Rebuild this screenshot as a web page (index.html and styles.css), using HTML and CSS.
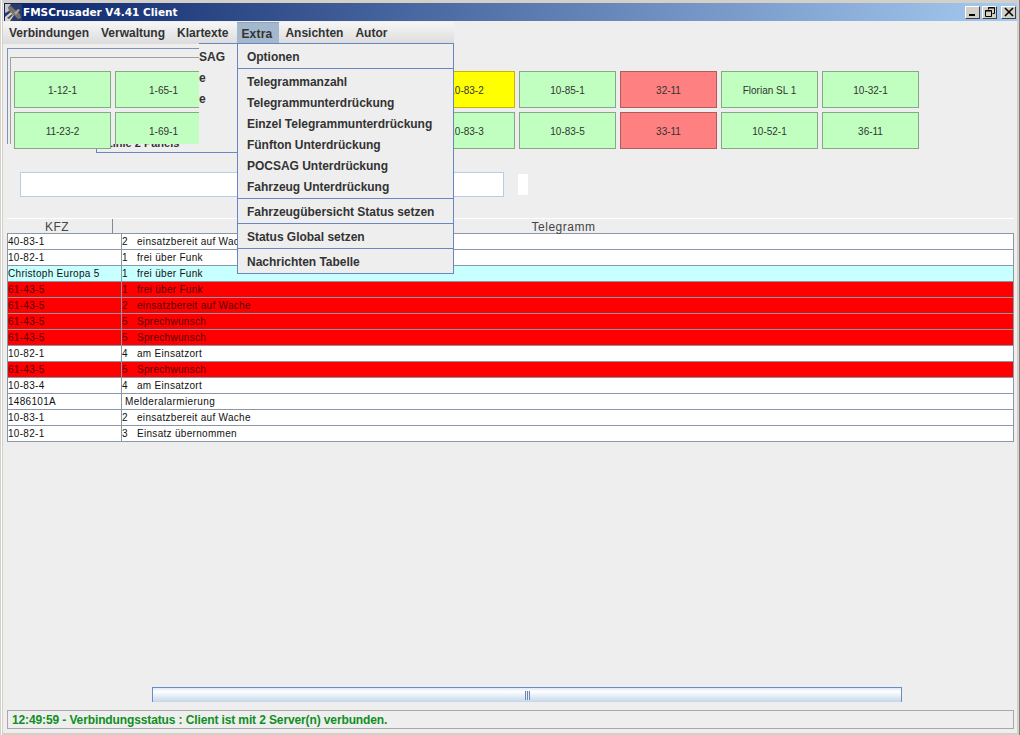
FILE: index.html
```html
<!DOCTYPE html>
<html lang="en">

<head>
    <meta charset="UTF-8">
    <title>FMSCrusader V4.41 Client</title>
    <link rel="stylesheet" href="styles.css">
</head>

<body>
    <div class="window">

        <!-- Title Bar -->
        <div class="titlebar">
            <svg class="app-icon" width="17" height="17" viewBox="0 0 17 17">
                <rect width="17" height="17" fill="#2a3a6e" />
                <path d="M0 0H6L3 4L6 6L0 9Z" fill="#c9c6bc" />
                <path d="M0 17V13L6 8L9 11L5 17Z" fill="#d8d5cc" />
                <path d="M3 3L6 2L9 5L15 10L16 14L13 15L8 10L4 7Z" fill="#77736a" />
                <path d="M9 9L13 5L15 6L11 11Z" fill="#a8a498" />
                <path d="M2 14L7 10L8 11L4 15Z" fill="#4c4a44" />
            </svg>
            <span class="title-text">FMSCrusader V4.41 Client</span>
            <div class="win-buttons">
                <div class="win-btn">
                    <svg width="10" height="10" viewBox="0 0 10 10"><rect x="1" y="7" width="6" height="2" fill="#000" /></svg>
                </div>
                <div class="win-btn">
                    <svg width="10" height="10" viewBox="0 0 10 10"><path d="M3.5 2.5V0.5H9.5V6.5H7.5M0.5 3.5H6.5V9.5H0.5Z M0.5 4H6.5 M3.5 1H9.5" fill="none" stroke="#000" /></svg>
                </div>
                <div class="win-btn">
                    <svg width="10" height="10" viewBox="0 0 10 10"><path d="M1 1L9 9M9 1L1 9" fill="none" stroke="#000" stroke-width="1.6" /></svg>
                </div>
            </div>
        </div>

        <!-- Menu Bar -->
        <nav class="menubar">
            <a>Verbindungen</a>
            <a>Verwaltung</a>
            <a>Klartexte</a>
            <a class="active">Extra</a>
            <a>Ansichten</a>
            <a>Autor</a>
        </nav>

        <!-- Vehicle Buttons -->
        <div class="panel">
            <div class="group-outer"></div>
            <div class="group-inner"></div>

            <div class="btn-grid">
                <div class="veh-btn">1-12-1</div>
                <div class="veh-btn">1-65-1</div>
                <div class="veh-btn"></div>
                <div class="veh-btn"></div>
                <div class="veh-btn yellow">10-83-2</div>
                <div class="veh-btn">10-85-1</div>
                <div class="veh-btn red">32-11</div>
                <div class="veh-btn">Florian SL 1</div>
                <div class="veh-btn">10-32-1</div>
                <div class="veh-btn front">11-23-2</div>
                <div class="veh-btn">1-69-1</div>
                <div class="veh-btn"></div>
                <div class="veh-btn"></div>
                <div class="veh-btn">10-83-3</div>
                <div class="veh-btn">10-83-5</div>
                <div class="veh-btn red">33-11</div>
                <div class="veh-btn">10-52-1</div>
                <div class="veh-btn">36-11</div>
            </div>

            <!-- Leftovers of the panel behind the menu -->
            <div class="ghost">
                <span class="ghost-title">SAG</span>
                <span class="ghost-e">e</span>
                <span class="ghost-e">e</span>
            </div>
            <div class="ghost-strip"><span>Linie 2 Panels</span></div>

            <div class="inputs">
                <div class="text-field"></div>
                <div class="small-field"></div>
            </div>
        </div>

        <!-- Telegram Table -->
        <div class="table-wrap">
            <div class="table-head">
                <div class="head-kfz">KFZ</div>
                <div class="head-tele">Telegramm</div>
            </div>
            <div class="table-body">
                <div class="row"><div class="kfz">40-83-1</div><div class="code">2</div><div class="msg">einsatzbereit auf Wache</div></div>
                <div class="row"><div class="kfz">10-82-1</div><div class="code">1</div><div class="msg">frei über Funk</div></div>
                <div class="row cyan"><div class="kfz">Christoph Europa 5</div><div class="code">1</div><div class="msg">frei über Funk</div></div>
                <div class="row alarm"><div class="kfz">61-43-5</div><div class="code">1</div><div class="msg">frei über Funk</div></div>
                <div class="row alarm"><div class="kfz">61-43-5</div><div class="code">2</div><div class="msg">einsatzbereit auf Wache</div></div>
                <div class="row alarm"><div class="kfz">61-43-5</div><div class="code">5</div><div class="msg">Sprechwunsch</div></div>
                <div class="row alarm"><div class="kfz">61-43-5</div><div class="code">5</div><div class="msg">Sprechwunsch</div></div>
                <div class="row"><div class="kfz">10-82-1</div><div class="code">4</div><div class="msg">am Einsatzort</div></div>
                <div class="row alarm"><div class="kfz">61-43-5</div><div class="code">5</div><div class="msg">Sprechwunsch</div></div>
                <div class="row"><div class="kfz">10-83-4</div><div class="code">4</div><div class="msg">am Einsatzort</div></div>
                <div class="row"><div class="kfz">1486101A</div><div class="melder">Melderalarmierung</div></div>
                <div class="row"><div class="kfz">10-83-1</div><div class="code">2</div><div class="msg">einsatzbereit auf Wache</div></div>
                <div class="row"><div class="kfz">10-82-1</div><div class="code">3</div><div class="msg">Einsatz übernommen</div></div>
            </div>
        </div>

        <div class="spacer"></div>

        <!-- Scrollbar and Status -->
        <div class="scrollbar"><div class="grip"></div></div>
        <div class="statusbar">12:49:59 - Verbindungsstatus : Client ist mit 2 Server(n) verbunden.</div>

        <!-- Open Extra Menu -->
        <div class="menu">
            <div class="menu-section">
                <div class="menu-item">Optionen</div>
            </div>
            <div class="menu-section">
                <div class="menu-item">Telegrammanzahl</div>
                <div class="menu-item">Telegrammunterdrückung</div>
                <div class="menu-item">Einzel Telegrammunterdrückung</div>
                <div class="menu-item">Fünfton Unterdrückung</div>
                <div class="menu-item">POCSAG Unterdrückung</div>
                <div class="menu-item">Fahrzeug Unterdrückung</div>
            </div>
            <div class="menu-section">
                <div class="menu-item">Fahrzeugübersicht Status setzen</div>
            </div>
            <div class="menu-section">
                <div class="menu-item">Status Global setzen</div>
            </div>
            <div class="menu-section">
                <div class="menu-item">Nachrichten Tabelle</div>
            </div>
        </div>

    </div>
</body>

</html>
```

FILE: styles.css
```css
/* Basic CSS for layout */
body {
    margin: 0;
    font-family: "Liberation Sans", Arial, sans-serif;
    background-color: #eeeeee;
    color: #333;
}

.window {
    position: relative;
    box-sizing: border-box;
    width: 1020px;
    height: 735px;
    padding: 3px 3px 2px 3px;
    display: flex;
    flex-direction: column;
    overflow: hidden;
    background-color: #eeeeee;
    box-shadow: inset 1px 0 0 #d4d0c8, inset 2px 0 0 #fff, inset 3px 0 0 #d4d0c8,
        inset -1px 0 0 #808080, inset -3px 0 0 #d4d0c8, inset 0 3px 0 #d4d0c8, inset 0 -2px 0 #d4d0c8;
}

/* Title Bar */
.titlebar {
    height: 18px;
    margin: 0 0 1px 1px;
    display: flex;
    align-items: center;
    background: linear-gradient(to right, #0a246a, #a6caf0);
    flex-shrink: 0;
}

.app-icon {
    margin-left: 1px;
}

.title-text {
    margin-left: 1px;
    font-family: "DejaVu Sans", sans-serif;
    font-size: 10.5px;
    font-weight: bold;
    color: #fff;
}

.win-buttons {
    margin-left: auto;
    display: flex;
    gap: 2px;
    padding-right: 1px;
}

.win-btn {
    box-sizing: border-box;
    width: 15px;
    height: 13px;
    display: flex;
    align-items: center;
    justify-content: center;
    background-color: #d4d0c8;
    border: 1px solid;
    border-color: #fff #404040 #404040 #fff;
}

.win-btn:last-child {
    margin-left: 2px;
}

/* Menu Bar */
.menubar {
    box-sizing: border-box;
    width: 451px;
    height: 22px;
    display: flex;
    background: linear-gradient(to bottom, #f6f6f6, #dcdcdc);
    flex-shrink: 0;
}

.menubar a {
    padding: 1px 6px 0;
    line-height: 21px;
    font-size: 12px;
    font-weight: bold;
}

.menubar a.active {
    margin-left: 3px;
    padding: 1px 7px 0 4px;
    background-color: #a3b8cc;
    border-top: 1px solid #8fa4bc;
    line-height: 20px;
    letter-spacing: 0.2px;
}

/* Vehicle Buttons */
.panel {
    position: relative;
    padding: 27px 0 0 11px;
    flex-shrink: 0;
}

.group-outer {
    position: absolute;
    left: 4px;
    top: 4px;
    width: 192px;
    height: 96px;
    box-sizing: border-box;
    border-left: 1px solid #7f93b5;
    border-top: 1px solid #7f93b5;
}

.group-inner {
    position: absolute;
    left: 7px;
    top: 13px;
    width: 189px;
    height: 87px;
    box-sizing: border-box;
    border-left: 1px solid #a0a0a0;
    border-top: 1px solid #a0a0a0;
}

.btn-grid {
    position: relative;
    display: grid;
    grid-template-columns: repeat(9, 97px);
    grid-auto-rows: 37px;
    gap: 4px;
}

.veh-btn {
    box-sizing: border-box;
    display: flex;
    align-items: center;
    justify-content: center;
    padding-top: 2px;
    background-color: #c0ffc0;
    border: 1px solid #87a887;
    font-size: 10px;
    color: #333;
}

.veh-btn.yellow {
    background-color: #ffff00;
    border-color: #c8b400;
}

.veh-btn.red {
    background-color: #ff8080;
    border-color: #b05c5c;
}

.veh-btn.front {
    position: relative;
    z-index: 3;
}

.ghost {
    position: absolute;
    left: 196px;
    top: -1px;
    width: 38px;
    height: 101px;
    z-index: 2;
    box-sizing: border-box;
    border-top: 1px solid #6a85c0;
    background-color: #eeeeee;
    font-size: 12px;
    font-weight: bold;
    display: flex;
    flex-direction: column;
    padding-top: 6px;
}

.ghost-title {
    height: 21px;
    line-height: 14px;
}

.ghost-e {
    height: 21px;
    line-height: 14px;
}

.ghost-strip {
    position: absolute;
    left: 93px;
    top: 100px;
    width: 144px;
    height: 9px;
    z-index: 2;
    box-sizing: border-box;
    overflow: hidden;
    background-color: #eeeeee;
    border-left: 1px solid #6a85c0;
    border-bottom: 1px solid #6a85c0;
    font-size: 11px;
    font-weight: bold;
}

.ghost-strip span {
    display: block;
    margin: -7px 0 0 9px;
    line-height: 12px;
    white-space: nowrap;
}

.inputs {
    margin: 23px 0 0 6px;
    display: flex;
    align-items: center;
    gap: 14px;
}

.text-field {
    box-sizing: border-box;
    width: 484px;
    height: 25px;
    background-color: #fff;
    border: 1px solid #b8cde4;
}

.small-field {
    width: 10px;
    height: 21px;
    background-color: #fff;
}

/* Telegram Table */
.table-wrap {
    margin: 21px 3px 0 4px;
    flex-shrink: 0;
}

.table-head {
    height: 15px;
    display: flex;
    border-top: 1px solid #fff;
    box-sizing: border-box;
    font-size: 12px;
    letter-spacing: 0.5px;
    color: #444;
}

.head-kfz {
    box-sizing: border-box;
    width: 106px;
    padding-right: 5px;
    border-right: 1px solid #7f8c9c;
    text-align: center;
    line-height: 16px;
}

.head-tele {
    flex: 1;
    text-align: center;
    line-height: 16px;
}

.table-body {
    border: 1px solid #8a97a6;
    border-top: 0;
    background-color: #fff;
}

.row {
    box-sizing: border-box;
    height: 16px;
    display: flex;
    border-top: 1px solid #8a97a6;
    font-size: 10px;
    letter-spacing: 0.3px;
    line-height: 15px;
    color: #111;
    white-space: nowrap;
}

.row.cyan {
    background-color: #c8ffff;
}

.row.alarm {
    background-color: #ff0000;
    color: #500000;
}

.kfz {
    box-sizing: border-box;
    width: 114px;
    border-right: 1px solid #8a97a6;
}

.code {
    width: 15px;
}

.melder {
    padding-left: 3px;
    letter-spacing: 0.4px;
}

.spacer {
    flex: 1;
}

/* Scrollbar and Status */
.scrollbar {
    box-sizing: border-box;
    width: 750px;
    height: 15px;
    margin: 0 0 8px 149px;
    display: flex;
    align-items: center;
    justify-content: center;
    border: 1px solid #6a8cc8;
    border-bottom: 0;
    background: linear-gradient(to bottom, #dfe8f6, #ffffff 25%, #c4d6ea);
    flex-shrink: 0;
}

.grip {
    width: 5px;
    height: 9px;
    background: repeating-linear-gradient(to right, #6f86b4 0, #6f86b4 1px, #e6eef8 1px, #e6eef8 2px);
}

.statusbar {
    box-sizing: border-box;
    height: 19px;
    margin: 0 3px 4px 4px;
    padding-left: 4px;
    border: 1px solid #a8a8a8;
    font-size: 12px;
    font-weight: bold;
    letter-spacing: -0.12px;
    line-height: 18px;
    color: #0f8f1f;
    flex-shrink: 0;
}

/* Open Extra Menu */
.menu {
    position: absolute;
    left: 237px;
    top: 43px;
    width: 217px;
    z-index: 5;
    box-sizing: border-box;
    background-color: #eeeeee;
    border: 1px solid #6a85c0;
}

.menu-section {
    padding: 2px 0 1px;
    border-top: 1px solid #6a85c0;
}

.menu-section:first-child {
    border-top: 0;
}

.menu-item {
    height: 20px;
    padding: 1px 0 0 9px;
    font-size: 12px;
    font-weight: bold;
    letter-spacing: -0.02px;
    line-height: 21px;
    white-space: nowrap;
}
```
